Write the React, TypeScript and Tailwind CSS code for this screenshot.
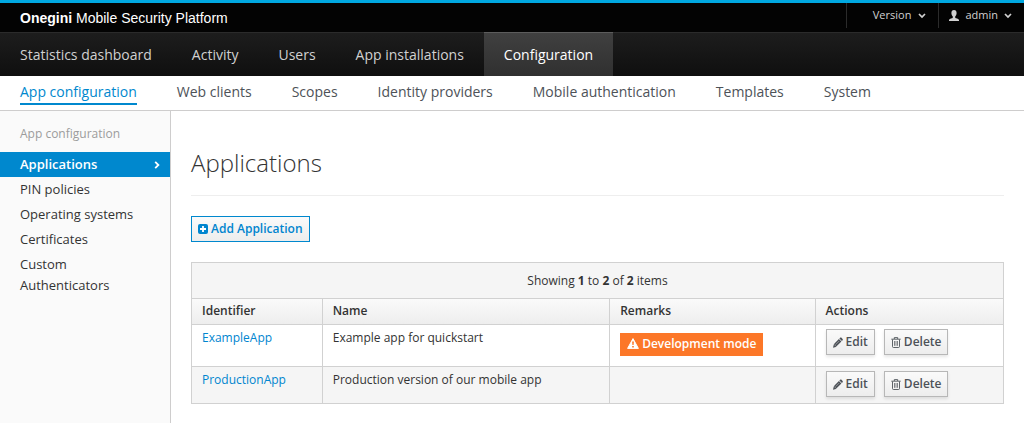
import type { ReactNode } from "react";

const primaryNav = ["Statistics dashboard", "Activity", "Users", "App installations", "Configuration"];

const secondaryNav = [
  "App configuration",
  "Web clients",
  "Scopes",
  "Identity providers",
  "Mobile authentication",
  "Templates",
  "System",
];

const sideNav = ["Applications", "PIN policies", "Operating systems", "Certificates", "Custom Authenticators"];

const applications = [
  { id: "ExampleApp", name: "Example app for quickstart", development: true },
  { id: "ProductionApp", name: "Production version of our mobile app", development: false },
];

function ChevronDown() {
  return (
    <svg viewBox="0 0 8 6" className="h-[6px] w-2" fill="none" stroke="currentColor" strokeWidth="1.7" aria-hidden="true">
      <path d="M1 1l3 3 3-3" />
    </svg>
  );
}

function ChevronRight() {
  return (
    <svg viewBox="0 0 6 8" className="h-2 w-[6px]" fill="none" stroke="currentColor" strokeWidth="1.8" aria-hidden="true">
      <path d="M1.200 0.800l3.200 3.200-3.200 3.200" />
    </svg>
  );
}

function UserIcon() {
  return (
    <svg viewBox="0 0 10 11" className="h-[11px] w-[10px]" fill="currentColor" aria-hidden="true">
      <path d="M5 0C3.300 0 2.400 1.200 2.400 2.900c0 1.500.6 2.800 1.400 3.500v1.100c0 .4-.3.600-.8.800C1.500 8.800 0 9.100 0 10.300V11h10v-.7c0-1.200-1.500-1.500-3-2-.5-.2-.8-.4-.8-.8V6.400c.8-.7 1.400-2 1.400-3.500C7.600 1.200 6.700 0 5 0z" />
    </svg>
  );
}

function PlusSquareIcon() {
  return (
    <svg viewBox="0 0 10 10" className="size-[10px]" aria-hidden="true">
      <rect width="10" height="10" rx="2" fill="currentColor" />
      <path d="M5 2v6M2 5h6" stroke="#ffffff" strokeWidth="1.800" />
    </svg>
  );
}

function WarningIcon() {
  return (
    <svg viewBox="0 0 12 11" className="h-[11px] w-3" aria-hidden="true">
      <path d="M6 .6L11.400 10.400H.6z" fill="currentColor" stroke="currentColor" strokeWidth="1" strokeLinejoin="round" />
      <path d="M5.100 3.600h1.800l-.3 3.500H5.400zM5.200 7.900h1.600v1.500H5.200z" fill="#fc7728" />
    </svg>
  );
}

function PencilIcon() {
  return (
    <svg viewBox="0 0 10 11" className="h-[11px] w-[10px]" fill="currentColor" aria-hidden="true">
      <path d="M7.100 .8c.4-.4 1-.4 1.400 0l1.100 1.100c.4.4.4 1 0 1.400l-.7.7L6.400 1.500zM5.900 2l2.500 2.500-4.600 4.600-.9.800L0 10.700l.7-2.900.8-1.200z" />
      <path d="M1.300 7.600l1.900 1.900M2.600 7.600l3.600-3.600" stroke="#d8d8d8" strokeWidth="0.5" />
    </svg>
  );
}

function TrashIcon() {
  return (
    <svg viewBox="0 0 10 11" className="h-[11px] w-[10px]" fill="none" stroke="currentColor" aria-hidden="true">
      <path d="M0.300 2.200h9.400M3.300 2V.6h3.400V2M1.500 2.500v7q0 1 1 1h5q1 0 1-1v-7" strokeWidth="0.900" />
      <path d="M3.500 4v4.800M5 4v4.800M6.500 4v4.800" strokeWidth="0.700" />
    </svg>
  );
}

function ActionButton({ icon, children }: { icon: ReactNode; children: ReactNode }) {
  return (
    <button
      type="button"
      className="flex h-[26px] items-center gap-[3px] border border-[#b7b7b7] bg-linear-to-b from-[#fafafa] to-[#ededed] px-[6px] font-semibold text-[#4d5258] shadow-[0_2px_3px_rgba(0,0,0,0.1)]"
    >
      {icon}
      {children}
    </button>
  );
}

export default function App() {
  return (
    <div className="flex min-h-screen flex-col bg-white font-['Open_Sans',sans-serif] text-xs text-[#333333]">
      <header>
        <div className="flex h-8 justify-between border-t-[3px] border-[#00a8e1] bg-[#030303]">
          <a href="#" className="flex items-center pl-5 font-['Liberation_Sans',sans-serif] text-sm text-white">
            <span>
              <b>Onegini</b> Mobile Security Platform
            </span>
          </a>
          <div className="flex h-[25px] text-[11px] text-[#d1d1d1]">
            <button type="button" className="flex items-center gap-[7px] border-l border-[#2b2b2b] pr-3 pl-[26px]">
              Version
              <ChevronDown />
            </button>
            <button type="button" className="flex items-center gap-[6px] border-l border-[#2b2b2b] pr-3 pl-[10px]">
              <UserIcon />
              admin
              <ChevronDown />
            </button>
          </div>
        </div>
        <nav
          aria-label="Primary"
          className="flex h-11 border-t border-[#2b2b2b] bg-linear-to-b from-[#1d1d1d] to-[#0f0f0f] text-sm font-medium"
        >
          {primaryNav.map((item) => (
            <a
              key={item}
              href="#"
              className={
                item === "Configuration"
                  ? "-mt-px flex items-center border-t border-[#5c5c5c] bg-linear-to-b from-[#404040] to-[#303030] px-5 text-white"
                  : "flex items-center px-5 text-[#d1d1d1]"
              }
            >
              {item}
            </a>
          ))}
        </nav>
        <nav
          aria-label="Secondary"
          className="flex h-[35px] gap-10 border-b border-[#cecdcd] px-5 pt-[6px] text-sm text-[#4d5258]"
        >
          {secondaryNav.map((item) => (
            <a
              key={item}
              href="#"
              className={
                item === "App configuration"
                  ? "h-[23px] border-b-2 border-[#0088ce] leading-5 text-[#0088ce]"
                  : "h-[23px] leading-5"
              }
            >
              {item}
            </a>
          ))}
        </nav>
      </header>

      <div className="flex flex-1">
        <aside className="w-[171px] shrink-0 border-r border-[#cecdcd] bg-[#fafafa] text-[13px] leading-[21px]">
          <h2 className="px-5 pt-3 pb-2 text-xs leading-[21px] text-[#9c9c9c]">App configuration</h2>
          <nav aria-label="App configuration">
            {sideNav.map((item) => (
              <a
                key={item}
                href="#"
                className={
                  item === "Applications"
                    ? "flex items-center justify-between bg-[#0088ce] py-[2px] pr-[10px] pl-5 font-semibold text-white"
                    : "block py-[2px] pr-6 pl-5"
                }
              >
                {item}
                {item === "Applications" && <ChevronRight />}
              </a>
            ))}
          </nav>
        </aside>

        <main className="min-w-0 flex-1 px-5 pt-9">
          <h1 className="border-b border-[#eeeeee] pb-4 text-2xl font-light">Applications</h1>
          <button
            type="button"
            className="mt-5 flex h-[26px] items-center gap-[3px] border border-[#0088ce] bg-linear-to-b from-[#fafafa] to-[#ededed] px-[6px] font-semibold text-[#0085cf]"
          >
            <PlusSquareIcon />
            Add Application
          </button>

          <table className="mt-5 w-full table-fixed border-collapse border border-[#d1d1d1] text-left">
            <colgroup>
              <col className="w-[16.1%]" />
              <col className="w-[35.4%]" />
              <col className="w-[25.3%]" />
              <col />
            </colgroup>
            <thead>
              <tr className="h-9 border-b border-[#d1d1d1] bg-[#f5f5f5]">
                <td colSpan={4} className="text-center">
                  Showing <b>1</b> to <b>2</b> of <b>2</b> items
                </td>
              </tr>
              <tr className="h-[26px] bg-linear-to-b from-[#fafafa] to-[#ededed]">
                {["Identifier", "Name", "Remarks", "Actions"].map((heading) => (
                  <th key={heading} scope="col" className="border border-[#d1d1d1] px-[10px] pb-[2px] font-semibold">
                    {heading}
                  </th>
                ))}
              </tr>
            </thead>
            <tbody>
              {applications.map((app) => (
                <tr key={app.id} className="align-top even:bg-[#f5f5f5]">
                  <td className="border border-[#d1d1d1] px-[10px] pt-[5px]">
                    <a href="#" className="text-[#0085cf]">
                      {app.id}
                    </a>
                  </td>
                  <td className="border border-[#d1d1d1] px-[10px] pt-[5px]">{app.name}</td>
                  <td className="border border-[#d1d1d1] px-[10px] pt-2">
                    {app.development && (
                      <span className="mb-[10px] inline-flex h-[23px] items-center gap-[3px] bg-[#fc7728] px-[7px] pb-[2px] align-top font-semibold text-white">
                        <WarningIcon />
                        Development mode
                      </span>
                    )}
                  </td>
                  <td className="border border-[#d1d1d1] px-[10px] pt-1 pb-[6px]">
                    <div className="flex gap-[9px]">
                      <ActionButton icon={<PencilIcon />}>Edit</ActionButton>
                      <ActionButton icon={<TrashIcon />}>Delete</ActionButton>
                    </div>
                  </td>
                </tr>
              ))}
            </tbody>
          </table>
        </main>
      </div>
    </div>
  );
}
